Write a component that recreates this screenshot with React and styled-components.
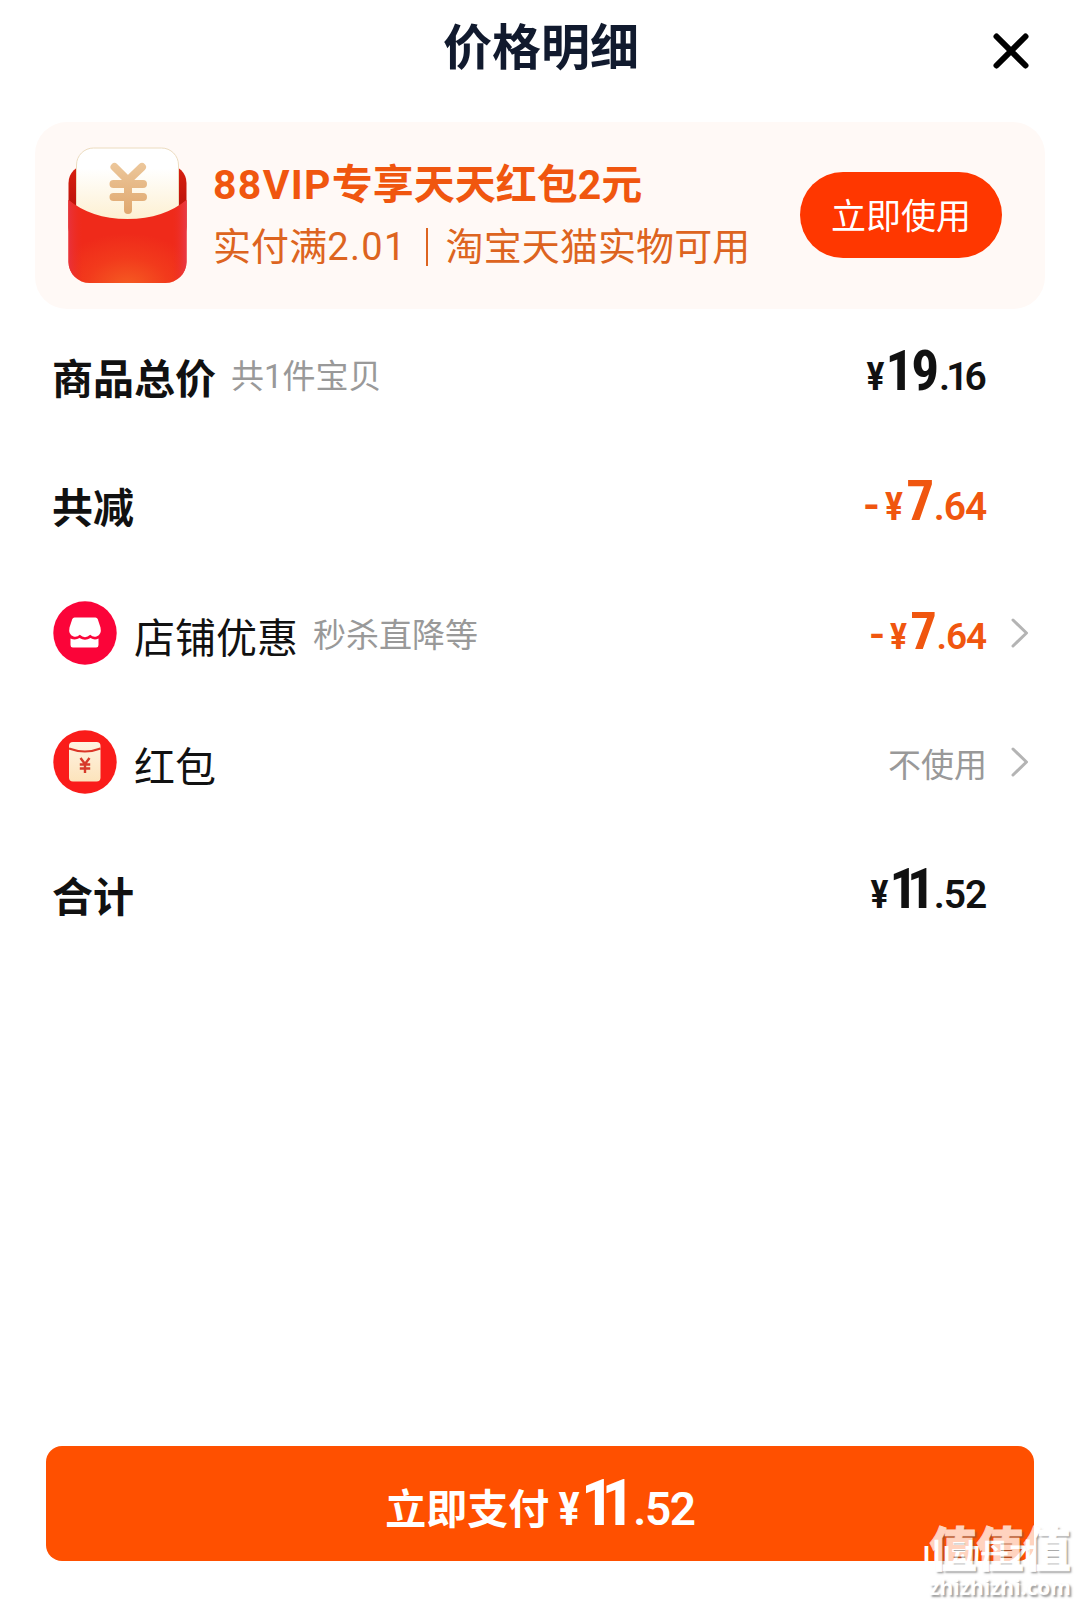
import React from 'react';
import styled, { createGlobalStyle } from 'styled-components';

const GlobalStyle = createGlobalStyle`
  * {
    box-sizing: border-box;
  }
  body {
    margin: 0;
    background: #fff;
    font-family: Roboto, 'Noto Sans CJK SC', sans-serif;
    color: #111;
  }
`;

const Page = styled.div`
  position: relative;
  display: flex;
  flex-direction: column;
  width: 1080px;
  height: 1606px;
  background: #fff;
  overflow: hidden;
`;

const Header = styled.header`
  display: grid;
  grid-template-columns: 1fr auto 1fr;
  align-items: center;
  height: 122px;
  padding: 0 51px 25px 53px;
`;

const Title = styled.h1`
  grid-column: 2;
  margin: 0;
  font-size: 49px;
  line-height: 60px;
  font-weight: 700;
  color: #111a2e;
`;

const CloseButton = styled.button`
  justify-self: end;
  display: flex;
  margin-top: 5px;
  padding: 0;
  border: none;
  background: none;
`;

const Coupon = styled.section`
  display: flex;
  align-items: center;
  height: 187px;
  margin: 0 35px;
  padding: 0 43px 0 33px;
  border-radius: 32px;
  background: #fff9f6;
`;

const CouponText = styled.div`
  flex: 1;
  margin: 2px 0 0 26px;
`;

const CouponTitle = styled.div`
  font-size: 41px;
  line-height: 60px;
  font-weight: 700;
  color: #f0560f;
  white-space: nowrap;
`;

const Latin = styled.span`
  letter-spacing: 1.3px;
`;

const CouponDesc = styled.div`
  display: flex;
  align-items: center;
  font-size: 38px;
  line-height: 64px;
  letter-spacing: 0.1px;
  color: #dd6420;
  white-space: nowrap;
`;

const Divider = styled.span`
  width: 2px;
  height: 38px;
  margin: 0 18px 0 19px;
  background: #dd6420;
`;

const UseButton = styled.button`
  width: 202px;
  height: 86px;
  margin-bottom: 1px;
  padding: 0 0 3px;
  border: none;
  border-radius: 43px;
  background: #ff3700;
  color: #fff;
  font-family: inherit;
  font-size: 35px;
`;

const List = styled.ul`
  margin: 4px 0 0;
  padding: 0 51px 0 52px;
  list-style: none;
`;

const Row = styled.li`
  display: flex;
  align-items: center;
  height: 129.5px;
`;

const RowIcon = styled.span`
  display: flex;
  margin: 0 17px 8px 1px;
`;

const Label = styled.span`
  margin-top: 4px;
  font-size: 41px;
  line-height: 60px;
  font-weight: ${(props) => (props.$bold ? 700 : 400)};
`;

const Note = styled.span`
  margin: 0 0 2px 15px;
  font-size: 33px;
  line-height: 48px;
  color: #999;
`;

const RowValue = styled.span`
  display: flex;
  align-items: center;
  margin-left: auto;
`;

const PriceSlot = styled.span`
  display: flex;
  margin: 0 1px 6px 0;
`;

const Unused = styled.span`
  font-size: 33px;
  line-height: 48px;
  color: #999;
`;

const Arrow = styled.span`
  display: flex;
  justify-content: flex-end;
  width: 42px;
  margin-bottom: 8px;
`;

const PriceWrap = styled.span`
  display: flex;
  align-items: baseline;
  font-family: Roboto, sans-serif;
  font-size: ${(props) => props.$size}px;
  font-stretch: 89%;
  line-height: 60px;
  font-weight: 580;
  color: ${(props) => props.$color};
`;

const Minus = styled.span`
  margin-right: 5px;
  font-size: 1.15em;
`;

const Yen = styled.span`
  margin-right: ${(props) => (props.$single ? '3px' : '1px')};
  font-stretch: 86%;
`;

const Whole = styled.span`
  font-size: 1.42em;
  font-weight: 680;
  font-stretch: 86%;
  letter-spacing: ${(props) => (props.$narrow ? '-0.19em' : '-0.04em')};
`;

const Cents = styled.span`
  margin-left: ${(props) => (props.$narrow ? '0.24em' : '0.05em')};
  margin-right: ${(props) => (props.$tight ? '3px' : 0)};
  letter-spacing: ${(props) => (props.$tight ? '-0.1em' : '-0.03em')};
`;

const Spacer = styled.div`
  flex: 1;
`;

const PayButton = styled.button`
  display: flex;
  align-items: center;
  justify-content: center;
  height: 115px;
  margin: 0 46px 45px;
  padding: 4px 0 0;
  border: none;
  border-radius: 16px;
  background: #ff5000;
  color: #fff;
  font-family: inherit;
`;

const PayLabel = styled.span`
  margin-right: 9px;
  font-size: 41px;
  font-weight: 700;
`;

const Watermark = styled.div`
  position: absolute;
  right: 9px;
  bottom: 4px;
  text-align: center;
  color: #fff;
  opacity: 0.75;
  text-shadow: 2px 2px 2px rgba(80, 80, 80, 0.75);
`;

const WatermarkName = styled.div`
  font-size: 47px;
  line-height: 46px;
  font-weight: 900;
  -webkit-text-stroke: 1px #fff;
`;

const WatermarkSite = styled.div`
  font-family: 'Open Sans', sans-serif;
  font-size: 21px;
  line-height: 29px;
  font-weight: 700;
`;

const UserMark = styled.div`
  position: absolute;
  right: 42px;
  bottom: 31px;
  font-size: 29px;
  line-height: 40px;
  font-weight: 700;
  color: #fff;
`;

function CloseIcon() {
  return (
    <svg width="36" height="36" viewBox="0 0 36 36" fill="none">
      <path d="M3.5 3.5L32.5 32.5M32.5 3.5L3.5 32.5" stroke="#000" strokeWidth="6" strokeLinecap="round" />
    </svg>
  );
}

function EnvelopeIcon() {
  return (
    <svg width="119" height="137" viewBox="0 0 119 137" fill="none">
      <defs>
        <linearGradient id="envBack" x1="0" y1="20" x2="0" y2="70" gradientUnits="userSpaceOnUse">
          <stop offset="0" stopColor="#d8200f" />
          <stop offset="1" stopColor="#b50f0a" />
        </linearGradient>
        <linearGradient id="paper" x1="0" y1="0" x2="0" y2="72" gradientUnits="userSpaceOnUse">
          <stop offset="0.3" stopColor="#fff" />
          <stop offset="1" stopColor="#fdf0d2" />
        </linearGradient>
        <linearGradient id="yen" x1="0" y1="16" x2="0" y2="66" gradientUnits="userSpaceOnUse">
          <stop offset="0" stopColor="#ecc79b" />
          <stop offset="1" stopColor="#e0a86f" />
        </linearGradient>
        <radialGradient id="envFront" cx="0.5" cy="1.05" r="0.65">
          <stop offset="0" stopColor="#f55d22" />
          <stop offset="0.55" stopColor="#f23a1c" />
          <stop offset="1" stopColor="#ef2a1a" />
        </radialGradient>
        <linearGradient id="envEdge" x1="0" y1="0" x2="1" y2="0">
          <stop offset="0" stopColor="#e8323c" />
          <stop offset="0.12" stopColor="#ee2c20" stopOpacity="0" />
          <stop offset="0.88" stopColor="#ee2c20" stopOpacity="0" />
          <stop offset="1" stopColor="#e83a48" />
        </linearGradient>
      </defs>
      <rect x="0.5" y="18" width="118" height="80" rx="18" fill="url(#envBack)" />
      <rect x="8.5" y="1" width="102" height="90" rx="17" fill="url(#paper)" stroke="#ecdcc0" />
      <g stroke="url(#yen)" strokeWidth="8" strokeLinecap="round">
        <path d="M46.5 20L60 33.5L74 20M45.5 37H75M45.5 50H75M60 34V63" />
      </g>
      <path d="M0.5 53C15 65 35 72 59.5 72S104 65 118.5 53V115A21 21 0 0 1 97.5 136H21.5A21 21 0 0 1 0.5 115Z" fill="url(#envFront)" />
      <path d="M0.5 53C15 65 35 72 59.5 72S104 65 118.5 53V115A21 21 0 0 1 97.5 136H21.5A21 21 0 0 1 0.5 115Z" fill="url(#envEdge)" />
    </svg>
  );
}

function ShopIcon() {
  return (
    <svg width="64" height="64" viewBox="0 0 64 64" fill="none">
      <circle cx="32" cy="32" r="31.7" fill="#fb0439" />
      <path d="M21.5 16.5H42.5Q44 16.5 44.7 18L47.5 26.5Q49 33.5 43.5 35.5Q40 36.5 37.2 33.8Q32 38.5 26.8 33.8Q24 36.5 20.5 35.5Q15 33.5 16.5 26.5L19.3 18Q20 16.5 21.5 16.5Z" fill="#fff" />
      <path d="M17.5 37.5Q22.5 39.5 26.5 37Q32 40.5 37.5 37Q41.5 39.5 45.5 37.5V44Q45.5 46.5 43.2 46.5H19.8Q17.5 46.5 17.5 44Z" fill="#fff" />
    </svg>
  );
}

function RedPacketIcon() {
  return (
    <svg width="64" height="64" viewBox="0 0 64 64" fill="none">
      <defs>
        <linearGradient id="packet" x1="0" y1="12" x2="0" y2="52" gradientUnits="userSpaceOnUse">
          <stop offset="0" stopColor="#fff3e2" />
          <stop offset="1" stopColor="#fce3bb" />
        </linearGradient>
      </defs>
      <circle cx="32" cy="32" r="31.7" fill="#fa1c1a" />
      <rect x="16" y="12" width="31.5" height="39.5" rx="4" fill="url(#packet)" />
      <path d="M16 18.5Q32 24.5 47.5 18.5" stroke="#dc3527" strokeWidth="2.2" />
      <path d="M27.5 28L32 34L36.5 28M26.8 34.5H37.2M26.8 38.5H37.2M32 34V43" stroke="#d63a2b" strokeWidth="2.4" />
    </svg>
  );
}

function Chevron() {
  return (
    <svg width="18" height="30" viewBox="0 0 18 30" fill="none">
      <path d="M2 2L15.5 15L2 28" stroke="#b4b4b4" strokeWidth="3" strokeLinecap="round" strokeLinejoin="round" />
    </svg>
  );
}

function Price({ value, minus, size = 39, color = '#111' }) {
  const [whole, cents] = value.split('.');
  const narrow = whole === '11';
  return (
    <PriceWrap $size={size} $color={color}>
      {minus && <Minus>-</Minus>}
      <Yen $single={whole.length === 1}>¥</Yen>
      <Whole $narrow={narrow}>{whole}</Whole>
      <Cents $narrow={narrow} $tight={cents[0] === '1'}>
        .{cents}
      </Cents>
    </PriceWrap>
  );
}

const rows = [
  { label: '商品总价', bold: true, note: '共1件宝贝', price: '19.16' },
  { label: '共减', bold: true, price: '7.64', minus: true, color: '#f0560f' },
  { label: '店铺优惠', icon: <ShopIcon />, note: '秒杀直降等', price: '7.64', minus: true, color: '#f0560f', size: 37, arrow: true },
  { label: '红包', icon: <RedPacketIcon />, value: '不使用', arrow: true },
  { label: '合计', bold: true, price: '11.52' },
];

function App() {
  return (
    <Page>
      <GlobalStyle />
      <Header>
        <Title>价格明细</Title>
        <CloseButton aria-label="关闭">
          <CloseIcon />
        </CloseButton>
      </Header>
      <Coupon>
        <EnvelopeIcon />
        <CouponText>
          <CouponTitle>
            <Latin>88VIP</Latin>专享天天红包2元
          </CouponTitle>
          <CouponDesc>
            实付满<Latin>2.01</Latin>
            <Divider />
            淘宝天猫实物可用
          </CouponDesc>
        </CouponText>
        <UseButton>立即使用</UseButton>
      </Coupon>
      <List>
        {rows.map((row) => (
          <Row key={row.label}>
            {row.icon && <RowIcon>{row.icon}</RowIcon>}
            <Label $bold={row.bold}>{row.label}</Label>
            {row.note && <Note>{row.note}</Note>}
            <RowValue>
              {row.price && (
                <PriceSlot>
                  <Price value={row.price} minus={row.minus} size={row.size} color={row.color} />
                </PriceSlot>
              )}
              {row.value && <Unused>{row.value}</Unused>}
              <Arrow>{row.arrow && <Chevron />}</Arrow>
            </RowValue>
          </Row>
        ))}
      </List>
      <Spacer />
      <PayButton>
        <PayLabel>立即支付</PayLabel>
        <Price value="11.52" size={46} color="#fff" />
      </PayButton>
      <UserMark>山动丹才</UserMark>
      <Watermark>
        <WatermarkName>值值值</WatermarkName>
        <WatermarkSite>zhizhizhi.com</WatermarkSite>
      </Watermark>
    </Page>
  );
}

export default App;
